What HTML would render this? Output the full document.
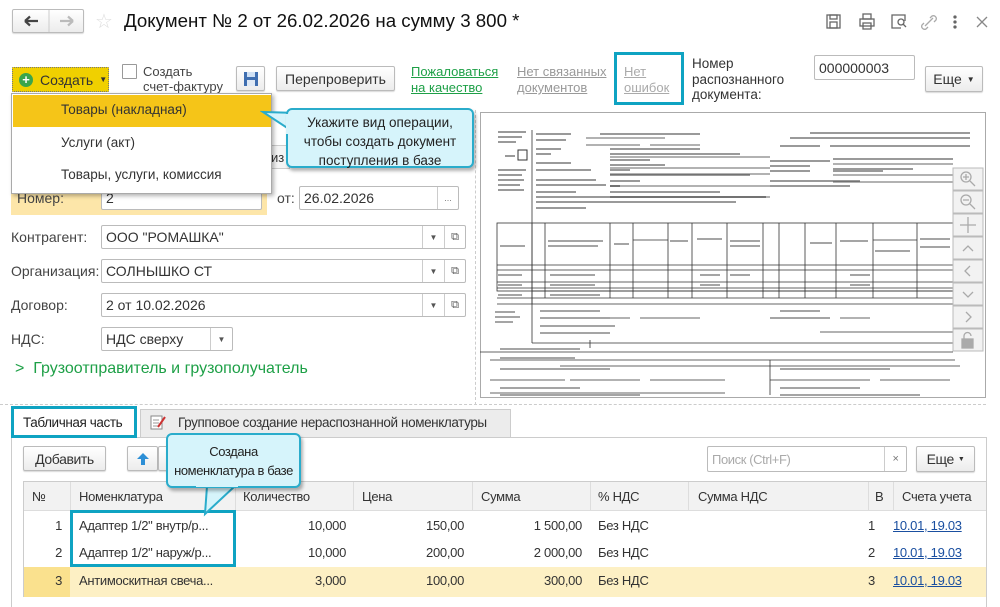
<!DOCTYPE html>
<html><head><meta charset="utf-8">
<style>
*{box-sizing:border-box;margin:0;padding:0}
body{width:1000px;height:597px;overflow:hidden;background:#fff;font-family:"Liberation Sans",Arial,sans-serif;font-size:13px;color:#333;position:relative}
.a{position:absolute}
.btn{position:absolute;border:1px solid #bbb;border-radius:2px;background:linear-gradient(#fff,#ececec);box-shadow:0 1px 1px rgba(0,0,0,.15);font-size:13px;color:#333;display:flex;align-items:center;justify-content:center}
.inp{position:absolute;border:1px solid #bbb;border-radius:2px;background:#fff;font-size:14px;color:#333;padding-left:4px;display:flex;align-items:center}
.dd{position:absolute;top:0;bottom:0;width:22px;border-left:1px solid #ccc;display:flex;align-items:center;justify-content:center;font-size:8px;color:#555}
.lbl{position:absolute;font-size:14px;color:#444}
.tip{position:absolute;background:#d6f4fb;border:2px solid #2aaccb;border-radius:6px;box-shadow:2px 3px 3px rgba(0,0,0,.3);text-align:center;color:#222;font-size:13.5px;line-height:19px;white-space:nowrap}
.n{letter-spacing:-0.4px}
.th{position:absolute;top:481px;height:30px;font-size:13px;color:#333;display:flex;align-items:center;letter-spacing:-0.3px}
.td{position:absolute;font-size:13px;color:#333;letter-spacing:-0.3px}
.r{text-align:right}
.lnk{color:#1a4fa0;text-decoration:underline}
</style></head><body>

<!-- nav -->
<div class="btn" style="left:12px;top:9px;width:72px;height:24px;justify-content:flex-start">
 <svg width="70" height="22" style="position:absolute;left:0;top:0"><path d="M12 11h13M12 11l5-4.5M12 11l5 4.5" stroke="#444" stroke-width="2.2" fill="none"/><path d="M36 0v22" stroke="#ccc"/><path d="M47 11h13M60 11l-5-4.5M60 11l-5 4.5" stroke="#bbb" stroke-width="2.2" fill="none"/></svg></div>
<div class="a" style="left:95px;top:9px;font-size:20px;color:#ddd">☆</div>
<div class="a" style="left:124px;top:10px;font-size:18.7px;color:#111">Документ № 2 от 26.02.2026 на сумму 3 800 *</div>
<svg class="a" style="left:820px;top:10px" width="175" height="24" viewBox="0 0 175 24" fill="none" stroke="#666" stroke-width="1.3">
 <rect x="7" y="5" width="13" height="13"/><rect x="10" y="5" width="7" height="4"/><rect x="10" y="12" width="7" height="6"/>
 <rect x="40" y="9" width="14" height="7"/><rect x="43" y="4" width="8" height="5"/><rect x="43" y="13" width="8" height="6"/>
 <path d="M81 18h-9V5h13v6"/><circle cx="81" cy="12" r="3"/><path d="M83 14l3 3"/>
 <path d="M105 16l8-8M104 13l-2 2a3 3 0 0 0 4 4l2-2M110 8l2-2a3 3 0 0 1 4 4l-2 2" stroke="#aaa"/>
 <circle cx="135" cy="7" r="1" fill="#666"/><circle cx="135" cy="12" r="1" fill="#666"/><circle cx="135" cy="17" r="1" fill="#666"/>
 <path d="M157 7l10 10M167 7l-10 10" stroke="#888"/>
</svg>

<!-- row 2 -->
<div class="a" style="left:12px;top:67px;width:97px;height:25px;background:#f0d000;border:1px dotted #777;border-radius:1px;display:flex;align-items:center;font-size:14px;color:#333">
 <span style="margin-left:6px;width:14px;height:14px;border-radius:50%;background:#3aa54b;color:#fff;font-size:13px;line-height:13px;text-align:center;font-weight:bold">+</span>
 <span style="margin-left:7px">Создать</span><span style="margin-left:6px;font-size:8px">▼</span></div>
<div class="a" style="left:122px;top:64px;width:15px;height:15px;border:1px solid #999;background:#fff;border-radius:1px"></div>
<div class="a" style="left:143px;top:64px;font-size:13px;line-height:15px;color:#444">Создать<br>счет-фактуру</div>
<div class="btn" style="left:236px;top:66px;width:29px;height:25px"><svg width="16" height="16"><rect x="1" y="1" width="14" height="14" fill="#3f6eb0"/><rect x="4" y="1" width="8" height="5" fill="#cfe0f4"/><rect x="4" y="9" width="8" height="6" fill="#dfe9f5"/></svg></div>
<div class="btn" style="left:276px;top:66px;width:119px;height:25px;font-size:14px">Перепроверить</div>
<div class="a" style="left:411px;top:64px;font-size:13px;line-height:16px;color:#1ea047;text-decoration:underline">Пожаловаться<br>на качество</div>
<div class="a" style="left:517px;top:64px;font-size:13px;line-height:16px;color:#999;text-decoration:underline">Нет связанных<br>документов</div>
<div class="a" style="left:614px;top:52px;width:70px;height:53px;border:3px solid #0fa3c2"></div>
<div class="a" style="left:624px;top:64px;font-size:13px;line-height:16px;color:#aaa;text-decoration:underline">Нет<br>ошибок</div>
<div class="a" style="left:692px;top:56px;font-size:13.5px;line-height:15.5px;color:#333">Номер<br>распознанного<br>документа:</div>
<div class="inp" style="left:814px;top:55px;width:101px;height:25px;font-size:14px">000000003</div>
<div class="btn" style="left:925px;top:66px;width:58px;height:26px;font-size:14px">Еще <span style="font-size:8px;margin-left:5px">▼</span></div>

<!-- form -->
<div class="a" style="left:11px;top:185px;width:256px;height:30px;background:#fde6a9"></div>
<div class="lbl" style="left:17px;top:190px">Номер:</div>
<div class="inp" style="left:101px;top:186px;width:161px;height:24px">2</div>
<div class="lbl" style="left:277px;top:190px">от:</div>
<div class="inp" style="left:299px;top:186px;width:160px;height:24px">26.02.2026<div class="dd" style="right:0;width:21px">…</div></div>
<div class="a" style="left:270px;top:145px;width:20px;height:24px;border:1px solid #ccc;background:#f4f4f4;font-size:13px;padding-top:4px">из</div>

<div class="lbl" style="left:11px;top:229px">Контрагент:</div>
<div class="inp" style="left:101px;top:225px;width:365px;height:24px">ООО "РОМАШКА"<div class="dd" style="right:21px">▼</div><div class="dd" style="right:0;width:21px;font-size:11px">⧉</div></div>
<div class="lbl" style="left:11px;top:263px">Организация:</div>
<div class="inp" style="left:101px;top:259px;width:365px;height:24px">СОЛНЫШКО СТ<div class="dd" style="right:21px">▼</div><div class="dd" style="right:0;width:21px;font-size:11px">⧉</div></div>
<div class="lbl" style="left:11px;top:297px">Договор:</div>
<div class="inp" style="left:101px;top:293px;width:365px;height:24px">2 от 10.02.2026<div class="dd" style="right:21px">▼</div><div class="dd" style="right:0;width:21px;font-size:11px">⧉</div></div>
<div class="lbl" style="left:11px;top:331px">НДС:</div>
<div class="inp" style="left:101px;top:327px;width:132px;height:24px">НДС сверху<div class="dd" style="right:0">▼</div></div>
<div class="a" style="left:15px;top:360px;font-size:16px;color:#1ea047">&gt;&nbsp; Грузоотправитель и грузополучатель</div>
<div class="a" style="left:475px;top:110px;height:295px;border-left:1px dashed #ccc"></div>

<!-- preview -->
<div class="a" style="left:480px;top:112px;width:506px;height:286px;border:1px solid #aaa;background:#fff"></div>
<svg class="a" style="left:480px;top:112px" width="506" height="286" viewBox="480 112 506 286">
 <g fill="#9a9a9a">
  <rect x="498" y="131" width="28" height="2"/><rect x="498" y="136" width="24" height="2"/><rect x="498" y="141" width="18" height="2"/>
  <rect x="505" y="155" width="10" height="2"/><rect x="518" y="150" width="9" height="10" fill="none" stroke="#333"/>
  <rect x="498" y="169" width="28" height="2"/><rect x="498" y="174" width="24" height="2"/><rect x="498" y="179" width="26" height="2"/><rect x="498" y="184" width="22" height="2"/><rect x="498" y="189" width="26" height="2"/>
  <rect x="536" y="133" width="35" height="2"/><rect x="536" y="139" width="30" height="2"/>
  <rect x="536" y="148" width="25" height="2"/><rect x="536" y="153" width="15" height="2"/><rect x="536" y="162" width="35" height="2"/><rect x="536" y="169" width="55" height="2"/>
  <rect x="536" y="179" width="60" height="2"/><rect x="536" y="184" width="70" height="2"/><rect x="536" y="191" width="40" height="2"/><rect x="536" y="196" width="230" height="2"/><rect x="536" y="201" width="200" height="2"/><rect x="536" y="207" width="50" height="2"/>
  <rect x="610" y="148" width="90" height="2"/><rect x="610" y="153" width="130" height="2"/><rect x="610" y="159" width="40" height="2"/><rect x="610" y="164" width="55" height="2"/><rect x="610" y="169" width="20" height="2"/><rect x="610" y="174" width="140" height="2"/><rect x="610" y="180" width="30" height="2"/><rect x="610" y="185" width="10" height="2"/><rect x="610" y="191" width="110" height="2"/>
  <rect x="600" y="133" width="100" height="2"/><rect x="770" y="160" width="60" height="2"/><rect x="770" y="165" width="40" height="2"/><rect x="770" y="170" width="40" height="2"/><rect x="770" y="180" width="90" height="2"/><rect x="770" y="185" width="80" height="2"/>
  <rect x="780" y="145" width="40" height="2"/><rect x="830" y="145" width="140" height="2"/>
  <rect x="810" y="132" width="160" height="2"/><rect x="790" y="137" width="180" height="2"/>
  <rect x="833" y="158" width="120" height="2"/><rect x="833" y="168" width="80" height="2"/><rect x="833" y="170" width="50" height="2"/>
 </g>
 <g stroke="#333" stroke-width="0.8" fill="none">
  <path d="M532 130V343M532 343H953"/>
  <path d="M586 138H640M640 138H665M586 145H640M650 145H700M610 157H770M610 168H770M610 174H770M610 186H770M833 164H953M833 175H953M833 182H953M610 197H770"/>
  <rect x="497" y="223" width="456" height="68"/>
  <path d="M497 265H953M497 270H953M497 282H953M497 288H953M497 298H953M497 304H953"/>
  <path d="M532 223V304M545 223V298M610 223V298M633 223V298M668 223V298M692 223V298M727 223V298M763 223V298M779 223V298M805 223V298M836 223V298M873 223V298M917 223V298M633 240H668M873 240H917M532 291H953"/>
  <path d="M570 318H630M640 318H700M773 318H820M840 318H870M820 332H953M480 352H953M560 352H630M590 348V340"/>
  <path d="M490 360H955M560 366H960M490 380H565M570 380H640M650 380H725M770 380H870M880 380H950M770 360V395M490 393H725"/>
 </g>
 <g fill="#a5a5a5">
  <rect x="500" y="245" width="25" height="2"/><rect x="548" y="240" width="55" height="2"/><rect x="548" y="245" width="50" height="2"/><rect x="614" y="243" width="15" height="2"/><rect x="670" y="240" width="18" height="2"/><rect x="697" y="238" width="25" height="2"/><rect x="730" y="240" width="30" height="2"/><rect x="730" y="245" width="30" height="2"/><rect x="810" y="242" width="22" height="2"/><rect x="840" y="240" width="28" height="2"/><rect x="875" y="250" width="35" height="2"/><rect x="920" y="238" width="30" height="2"/><rect x="920" y="246" width="30" height="2"/>
  <rect x="498" y="274" width="24" height="2"/><rect x="550" y="274" width="45" height="2"/><rect x="700" y="274" width="20" height="2"/><rect x="730" y="274" width="20" height="2"/><rect x="850" y="274" width="20" height="2"/>
  <rect x="498" y="284" width="24" height="2"/><rect x="550" y="284" width="45" height="2"/><rect x="700" y="284" width="20" height="2"/><rect x="850" y="284" width="20" height="2"/>
  <rect x="498" y="294" width="24" height="2"/><rect x="550" y="294" width="50" height="2"/>
  <rect x="540" y="310" width="60" height="2"/><rect x="540" y="317" width="70" height="2"/><rect x="540" y="325" width="75" height="2"/><rect x="540" y="332" width="70" height="2"/><rect x="780" y="310" width="40" height="2"/><rect x="770" y="317" width="60" height="2"/>
  <rect x="495" y="311" width="20" height="2"/><rect x="495" y="316" width="25" height="2"/><rect x="495" y="321" width="18" height="2"/>
  <rect x="500" y="348" width="80" height="2"/><rect x="500" y="357" width="75" height="2"/><rect x="500" y="368" width="110" height="2"/><rect x="780" y="368" width="110" height="2"/><rect x="500" y="387" width="80" height="2"/><rect x="780" y="387" width="80" height="2"/><rect x="500" y="394" width="140" height="2"/><rect x="780" y="394" width="140" height="2"/>
 </g>
 <g fill="#f2f2f2" stroke="#bbb" stroke-width="1">
  <rect x="953" y="168" width="30" height="22"/><rect x="953" y="191" width="30" height="22"/><rect x="953" y="214" width="30" height="22"/><rect x="953" y="237" width="30" height="22"/><rect x="953" y="260" width="30" height="22"/><rect x="953" y="283" width="30" height="22"/><rect x="953" y="306" width="30" height="22"/><rect x="953" y="329" width="30" height="22"/>
 </g>
 <g stroke="#aaa" stroke-width="1.3" fill="none">
  <circle cx="966" cy="177" r="5"/><path d="M970 181l5 5M963 177h6M966 174v6"/>
  <circle cx="966" cy="200" r="5"/><path d="M970 204l5 5M963 200h6"/>
  <path d="M968 217v16M960 225h16"/>
  <path d="M963 251l5-5 5 5"/><path d="M970 266l-5 5 5 5"/><path d="M963 292l5 5 5-5"/><path d="M966 312l5 5-5 5"/>
  <rect x="962" y="339" width="11" height="9" fill="#aaa"/><path d="M964 339v-3a3.5 3.5 0 0 1 7 0"/>
 </g>
</svg>
<div class="a" style="left:0;top:404px;width:986px;border-top:1px dashed #ccc"></div>

<!-- tabs -->
<div class="a n" style="left:140px;top:409px;width:371px;height:29px;background:#ececec;border:1px solid #ccc;border-bottom:none;font-size:13.5px;padding:5px 0 0 37px;color:#333;white-space:nowrap">Групповое создание нераспознанной номенклатуры</div>
<svg class="a" style="left:150px;top:414px" width="16" height="16"><rect x="1" y="2" width="11" height="13" fill="#fff" stroke="#888"/><path d="M3 6h6M3 9h6M3 12h5" stroke="#999"/><path d="M8 13l7-10" stroke="#c33" stroke-width="2"/></svg>
<div class="a" style="left:11px;top:437px;width:976px;height:170px;border:1px solid #ccc;border-bottom:none"></div>
<div class="a n" style="left:11px;top:406px;width:126px;height:32px;border:3px solid #0fa3c2;background:#fff;font-size:13.5px;padding:6px 0 0 9px;color:#222;white-space:nowrap">Табличная часть</div>

<div class="btn n" style="left:23px;top:446px;width:83px;height:25px;font-size:14px">Добавить</div>
<div class="btn" style="left:127px;top:446px;width:31px;height:25px"><svg width="14" height="14"><path d="M7 1l6 6H9v6H5V7H1z" fill="#2d8fd6"/></svg></div>
<div class="btn" style="left:158px;top:446px;width:20px;height:25px"></div>
<div class="inp n" style="left:707px;top:446px;width:200px;height:26px;color:#aaa;font-size:13px">Поиск (Ctrl+F)<div class="dd" style="right:0;width:22px;font-size:11px;color:#777">×</div></div>
<div class="btn n" style="left:916px;top:446px;width:59px;height:26px;font-size:14px">Еще <span style="font-size:7px;margin-left:4px">▼</span></div>

<!-- table -->
<div class="a" style="left:23px;top:481px;width:964px;height:116px;border:1px solid #ccc;border-bottom:none"></div>
<div class="a" style="left:24px;top:482px;width:962px;height:29px;background:#f2f2f2;border-bottom:1px solid #ddd"></div>
<div class="a" style="left:24px;top:567px;width:962px;height:30px;background:#fdf0c4"></div>
<div class="a" style="left:24px;top:567px;width:46px;height:30px;background:#fae18e"></div>
<div class="a" style="left:70px;top:482px;height:29px;border-left:1px solid #ddd"></div>
<div class="a" style="left:235px;top:482px;height:29px;border-left:1px solid #ddd"></div>
<div class="a" style="left:353px;top:482px;height:29px;border-left:1px solid #ddd"></div>
<div class="a" style="left:472px;top:482px;height:29px;border-left:1px solid #ddd"></div>
<div class="a" style="left:590px;top:482px;height:29px;border-left:1px solid #ddd"></div>
<div class="a" style="left:688px;top:482px;height:29px;border-left:1px solid #ddd"></div>
<div class="a" style="left:868px;top:482px;height:29px;border-left:1px solid #ddd"></div>
<div class="a" style="left:893px;top:482px;height:29px;border-left:1px solid #ddd"></div>
<div class="th" style="left:32px">№</div>
<div class="th" style="left:79px">Номенклатура</div>
<div class="th" style="left:243px">Количество</div>
<div class="th" style="left:362px">Цена</div>
<div class="th" style="left:481px">Сумма</div>
<div class="th" style="left:598px">% НДС</div>
<div class="th" style="left:698px">Сумма НДС</div>
<div class="th" style="left:875px">В</div>
<div class="th" style="left:902px">Счета учета</div>

<div class="td r" style="left:24px;width:38px;top:518px">1</div>
<div class="td" style="left:79px;top:518px">Адаптер 1/2" внутр/р...</div>
<div class="td r" style="left:240px;width:106px;top:518px">10,000</div>
<div class="td r" style="left:360px;width:104px;top:518px">150,00</div>
<div class="td r" style="left:478px;width:104px;top:518px">1 500,00</div>
<div class="td" style="left:598px;top:518px">Без НДС</div>
<div class="td" style="left:868px;top:518px">1</div>
<div class="td lnk" style="left:893px;top:518px">10.01, 19.03</div>

<div class="td r" style="left:24px;width:38px;top:545px">2</div>
<div class="td" style="left:79px;top:545px">Адаптер 1/2" наруж/р...</div>
<div class="td r" style="left:240px;width:106px;top:545px">10,000</div>
<div class="td r" style="left:360px;width:104px;top:545px">200,00</div>
<div class="td r" style="left:478px;width:104px;top:545px">2 000,00</div>
<div class="td" style="left:598px;top:545px">Без НДС</div>
<div class="td" style="left:868px;top:545px">2</div>
<div class="td lnk" style="left:893px;top:545px">10.01, 19.03</div>

<div class="td r" style="left:24px;width:38px;top:573px">3</div>
<div class="td" style="left:79px;top:573px">Антимоскитная свеча...</div>
<div class="td r" style="left:240px;width:106px;top:573px">3,000</div>
<div class="td r" style="left:360px;width:104px;top:573px">100,00</div>
<div class="td r" style="left:478px;width:104px;top:573px">300,00</div>
<div class="td" style="left:598px;top:573px">Без НДС</div>
<div class="td" style="left:868px;top:573px">3</div>
<div class="td lnk" style="left:893px;top:573px">10.01, 19.03</div>

<div class="a" style="left:70px;top:510px;width:166px;height:57px;border:3px solid #0fa3c2"></div>

<!-- tooltip 2 -->
<svg class="a" style="left:195px;top:484px" width="50" height="34"><path d="M12 2L10 30L40 2" fill="#d6f4fb" stroke="#2aaccb" stroke-width="2"/></svg>
<div class="tip n" style="left:166px;top:433px;width:135px;height:55px;padding-top:7px;font-size:13px">Создана<br>номенклатура в базе</div>
<div class="a" style="left:196px;top:484px;width:42px;height:3px;background:#d6f4fb"></div>

<!-- dropdown -->
<div class="a" style="left:11px;top:93px;width:261px;height:101px;background:#fff;border:1px solid #aaa;box-shadow:2px 2px 4px rgba(0,0,0,.3)"></div>
<div class="a" style="left:13px;top:95px;width:258px;height:32px;background:#f5c518"></div>
<div class="a" style="left:61px;top:102px;font-size:13.5px;color:#333">Товары (накладная)</div>
<div class="a" style="left:61px;top:135px;font-size:13.5px;color:#333">Услуги (акт)</div>
<div class="a" style="left:61px;top:167px;font-size:13.5px;color:#333">Товары, услуги, комиссия</div>

<!-- tooltip 1 -->
<svg class="a" style="left:260px;top:105px" width="40" height="40"><path d="M38 8L3 7L38 30" fill="#d6f4fb" stroke="#2aaccb" stroke-width="2"/></svg>
<div class="tip" style="left:286px;top:108px;width:188px;height:60px;padding-top:3px">Укажите вид операции,<br>чтобы создать документ<br>поступления в базе</div>
<div class="a" style="left:286px;top:114px;width:4px;height:20px;background:#d6f4fb"></div>
</body></html>
